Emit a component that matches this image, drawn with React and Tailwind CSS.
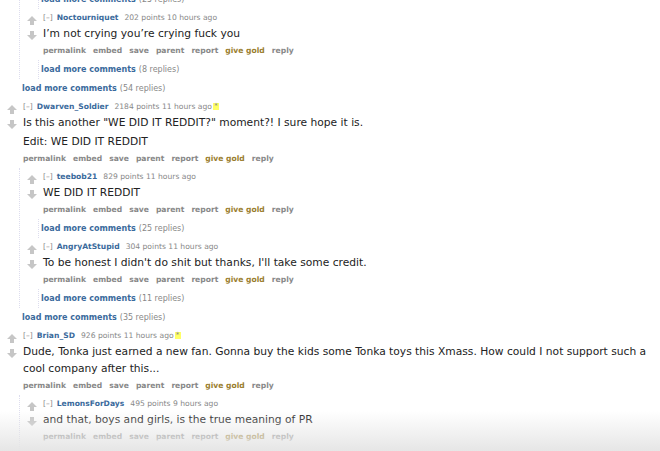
import React from "react";

const font = { fontFamily: '"DejaVu Sans", Verdana, sans-serif' };

function Arrow({ down }) {
  return (
    <svg width="10" height="9" viewBox="0 0 10 9" className={down ? "rotate-180" : ""}>
      <path d="M5 0 L10 5 L7 5 L7 9 L3 9 L3 5 L0 5 Z" fill="#c6c6c6" />
    </svg>
  );
}

function Actions() {
  const items = ["permalink", "embed", "save", "parent", "report", "give gold", "reply"];
  return (
    <div className="flex h-[18px] items-center gap-[7px] text-[7.6px] font-bold">
      {items.map((it) => (
        <span key={it} className={it === "give gold" ? "text-[#9a7d2e]" : "text-[#888]"}>
          {it}
        </span>
      ))}
    </div>
  );
}

function LoadMore({ replies, nested }) {
  return (
    <div className={nested ? "ml-[18px] border-l border-dotted border-[#dde] pl-[2px]" : "pl-[22px]"}>
      <div className="flex h-[19px] items-center gap-[3px] text-[8px]">
        <span className="font-bold text-[#3a6a9c]">load more comments</span>
        <span className="text-[#888]">({replies} replies)</span>
      </div>
    </div>
  );
}

function Comment({ author, points, time, edited, body, children }) {
  return (
    <div className="pt-[1px]">
      <div className="flex">
        <div className="flex w-[23px] shrink-0 flex-col items-center pt-[6px] gap-[6px]">
          <Arrow />
          <Arrow down />
        </div>
        <div className="flex-1">
          <div className="flex h-[15px] items-center text-[7.6px]">
            <span className="text-[#888]">[–]</span>
            <span className="ml-[4px] font-bold text-[#3a6a9c]">{author}</span>
            <span className="ml-[6px] text-[#888]">{points} points {time}</span>
            {edited && (
              <span className="ml-[1px] flex h-[7px] w-[6px] items-start justify-center bg-[#ffff66] text-[7px] leading-[7px] text-[#888]">
                *
              </span>
            )}
          </div>
          <div className="flex flex-col gap-[2px] pr-[2px] text-[10.7px] leading-[17px] text-[#222]">
            {body.map((p, i) => (
              <p key={i}>{p}</p>
            ))}
          </div>
          <Actions />
        </div>
      </div>
      {children && (
        <div className="ml-[19px] border-l border-dotted border-[#dde]">{children}</div>
      )}
    </div>
  );
}

export default function App() {
  return (
    <div className="relative h-[451px] w-[660px] overflow-hidden bg-white" style={font}>
      <div className="-mt-[10px]">
        <div className="ml-[19px] border-l border-dotted border-[#dde]">
          <LoadMore replies={25} nested />
          <Comment
            author="Noctourniquet"
            points={202}
            time="10 hours ago"
            body={["I’m not crying you’re crying fuck you"]}
          />
          <LoadMore replies={8} nested />
        </div>
        <LoadMore replies={54} />
        <Comment
          author="Dwarven_Soldier"
          points={2184}
          time="11 hours ago"
          edited
          body={['Is this another "WE DID IT REDDIT?" moment?! I sure hope it is.', "Edit: WE DID IT REDDIT"]}
        >
          <Comment author="teebob21" points={829} time="11 hours ago" body={["WE DID IT REDDIT"]} />
          <LoadMore replies={25} nested />
          <Comment
            author="AngryAtStupid"
            points={304}
            time="11 hours ago"
            body={["To be honest I didn't do shit but thanks, I'll take some credit."]}
          />
          <LoadMore replies={11} nested />
        </Comment>
        <LoadMore replies={35} />
        <Comment
          author="Brian_SD"
          points={926}
          time="11 hours ago"
          edited
          body={[
            "Dude, Tonka just earned a new fan. Gonna buy the kids some Tonka toys this Xmass. How could I not support such a cool company after this...",
          ]}
        >
          <Comment
            author="LemonsForDays"
            points={495}
            time="9 hours ago"
            body={["and that, boys and girls, is the true meaning of PR"]}
          />
          <Comment author="KidCat22" points={112} time="9 hours ago" body={["..."]} />
        </Comment>
      </div>
      <div className="pointer-events-none absolute inset-x-0 bottom-0 h-[40px] bg-gradient-to-b from-white/0 to-[#e6e6e6]" />
    </div>
  );
}
